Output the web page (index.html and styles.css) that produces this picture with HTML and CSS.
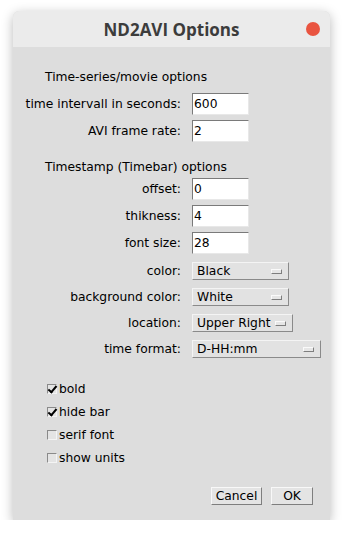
FILE: index.html
```html
<!DOCTYPE html>
<html lang="en">
<head>
    <meta charset="UTF-8">
    <meta name="viewport" content="width=device-width, initial-scale=1.0">
    <title>ND2AVI Options</title>
    <link rel="stylesheet" href="styles.css">
</head>
<body>

<div class="dialog">
    <!-- Title bar -->
    <div class="titlebar">
        <span class="title">ND2AVI Options</span>
        <span class="close"></span>
    </div>

    <div class="content">
        <div class="heading">Time-series/movie options</div>
        <div class="rows fields">
            <label>time intervall in seconds:</label>
            <div class="field">600</div>
            <label>AVI frame rate:</label>
            <div class="field">2</div>
        </div>

        <div class="heading second">Timestamp (Timebar) options</div>
        <div class="rows fields">
            <label>offset:</label>
            <div class="field">0</div>
            <label>thikness:</label>
            <div class="field">4</div>
            <label>font size:</label>
            <div class="field">28</div>
        </div>

        <div class="rows choices">
            <label>color:</label>
            <div class="choice w96">Black<span class="knob"></span></div>
            <label>background color:</label>
            <div class="choice w96">White<span class="knob"></span></div>
            <label>location:</label>
            <div class="choice w100">Upper Right<span class="knob"></span></div>
            <label>time format:</label>
            <div class="choice w128">D-HH:mm<span class="knob"></span></div>
        </div>

        <div class="checks">
            <div class="check"><span class="box checked"></span>bold</div>
            <div class="check"><span class="box checked"></span>hide bar</div>
            <div class="check"><span class="box"></span>serif font</div>
            <div class="check"><span class="box"></span>show units</div>
        </div>

        <div class="buttons">
            <button class="btn cancel">Cancel</button>
            <button class="btn ok">OK</button>
        </div>
    </div>
</div>

</body>
</html>
```

FILE: styles.css
```css
body {
    margin: 0;
    background-color: #ffffff;
    font-family: "DejaVu Sans", sans-serif;
    font-size: 12.3px;
    color: #000;
}
.dialog {
    width: 317px;
    margin: 11px 0 0 13px;
    border-radius: 6px 6px 0 0;
    background-color: #dddddd;
    box-shadow: 0 3px 12px rgba(0, 0, 0, 0.28);
}
.titlebar {
    height: 36px;
    display: flex;
    align-items: center;
    justify-content: center;
    position: relative;
    background-color: #ebebeb;
    border-radius: 6px 6px 0 0;
}
.title {
    font-family: "Open Sans", sans-serif;
    font-weight: 700;
    font-size: 17px;
    color: #3c3c3c;
}
.close {
    position: absolute;
    right: 10px;
    top: 11px;
    width: 14px;
    height: 14px;
    border-radius: 50%;
    background-color: #e95440;
}
.content {
    padding: 22px 17px 15px 0;
}
.heading {
    margin-left: 32px;
    line-height: 16px;
    margin-bottom: 8px;
}
.heading.second {
    margin-top: 17px;
    margin-bottom: 3px;
}
.rows {
    display: grid;
    grid-template-columns: 168px auto;
    column-gap: 11px;
    align-items: center;
}
.rows label {
    text-align: right;
    white-space: nowrap;
}
.fields {
    row-gap: 5px;
}
.field {
    width: 54px;
    height: 20px;
    line-height: 20px;
    padding-left: 1px;
    background-color: #fff;
    border: 1px solid;
    border-color: #7a7a7a #e8e8e8 #e8e8e8 #7a7a7a;
}
.choices {
    margin-top: 8px;
    row-gap: 8px;
}
.choice {
    height: 16px;
    line-height: 16px;
    padding-left: 4px;
    position: relative;
    background-color: #e2e2e2;
    border: 1px solid;
    border-color: #f4f4f4 #8a8a8a #8a8a8a #f4f4f4;
}
.w96 { width: 91px; }
.w100 { width: 95px; }
.w128 { width: 123px; }
.knob {
    position: absolute;
    right: 6px;
    top: 6px;
    width: 9px;
    height: 3px;
    background-color: #e6e6e6;
    border: 1px solid;
    border-color: #fafafa #7e7e7e #7e7e7e #fafafa;
}
.checks {
    margin: 23px 0 0 34px;
    display: flex;
    flex-direction: column;
    gap: 7px;
}
.check {
    display: flex;
    align-items: center;
    line-height: 16px;
}
.box {
    width: 8px;
    height: 8px;
    margin-right: 2px;
    background-color: #e4e4e4;
    border: 1px solid;
    border-color: #8a8a8a #f4f4f4 #f4f4f4 #8a8a8a;
    position: relative;
}
.box.checked::after {
    content: "";
    position: absolute;
    left: 2px;
    top: -1px;
    width: 3px;
    height: 7px;
    border: solid #000;
    border-width: 0 2px 2px 0;
    transform: rotate(40deg);
}
.buttons {
    margin-top: 21px;
    display: flex;
    justify-content: flex-end;
    gap: 9px;
}
.btn {
    height: 18px;
    padding: 0;
    font-family: "DejaVu Sans", sans-serif;
    font-size: 12.3px;
    color: #000;
    background-color: #e4e4e4;
    border: 1px solid;
    border-color: #f8f8f8 #7e7e7e #7e7e7e #f8f8f8;
}
.cancel {
    width: 51px;
}
.ok {
    width: 42px;
}
```
